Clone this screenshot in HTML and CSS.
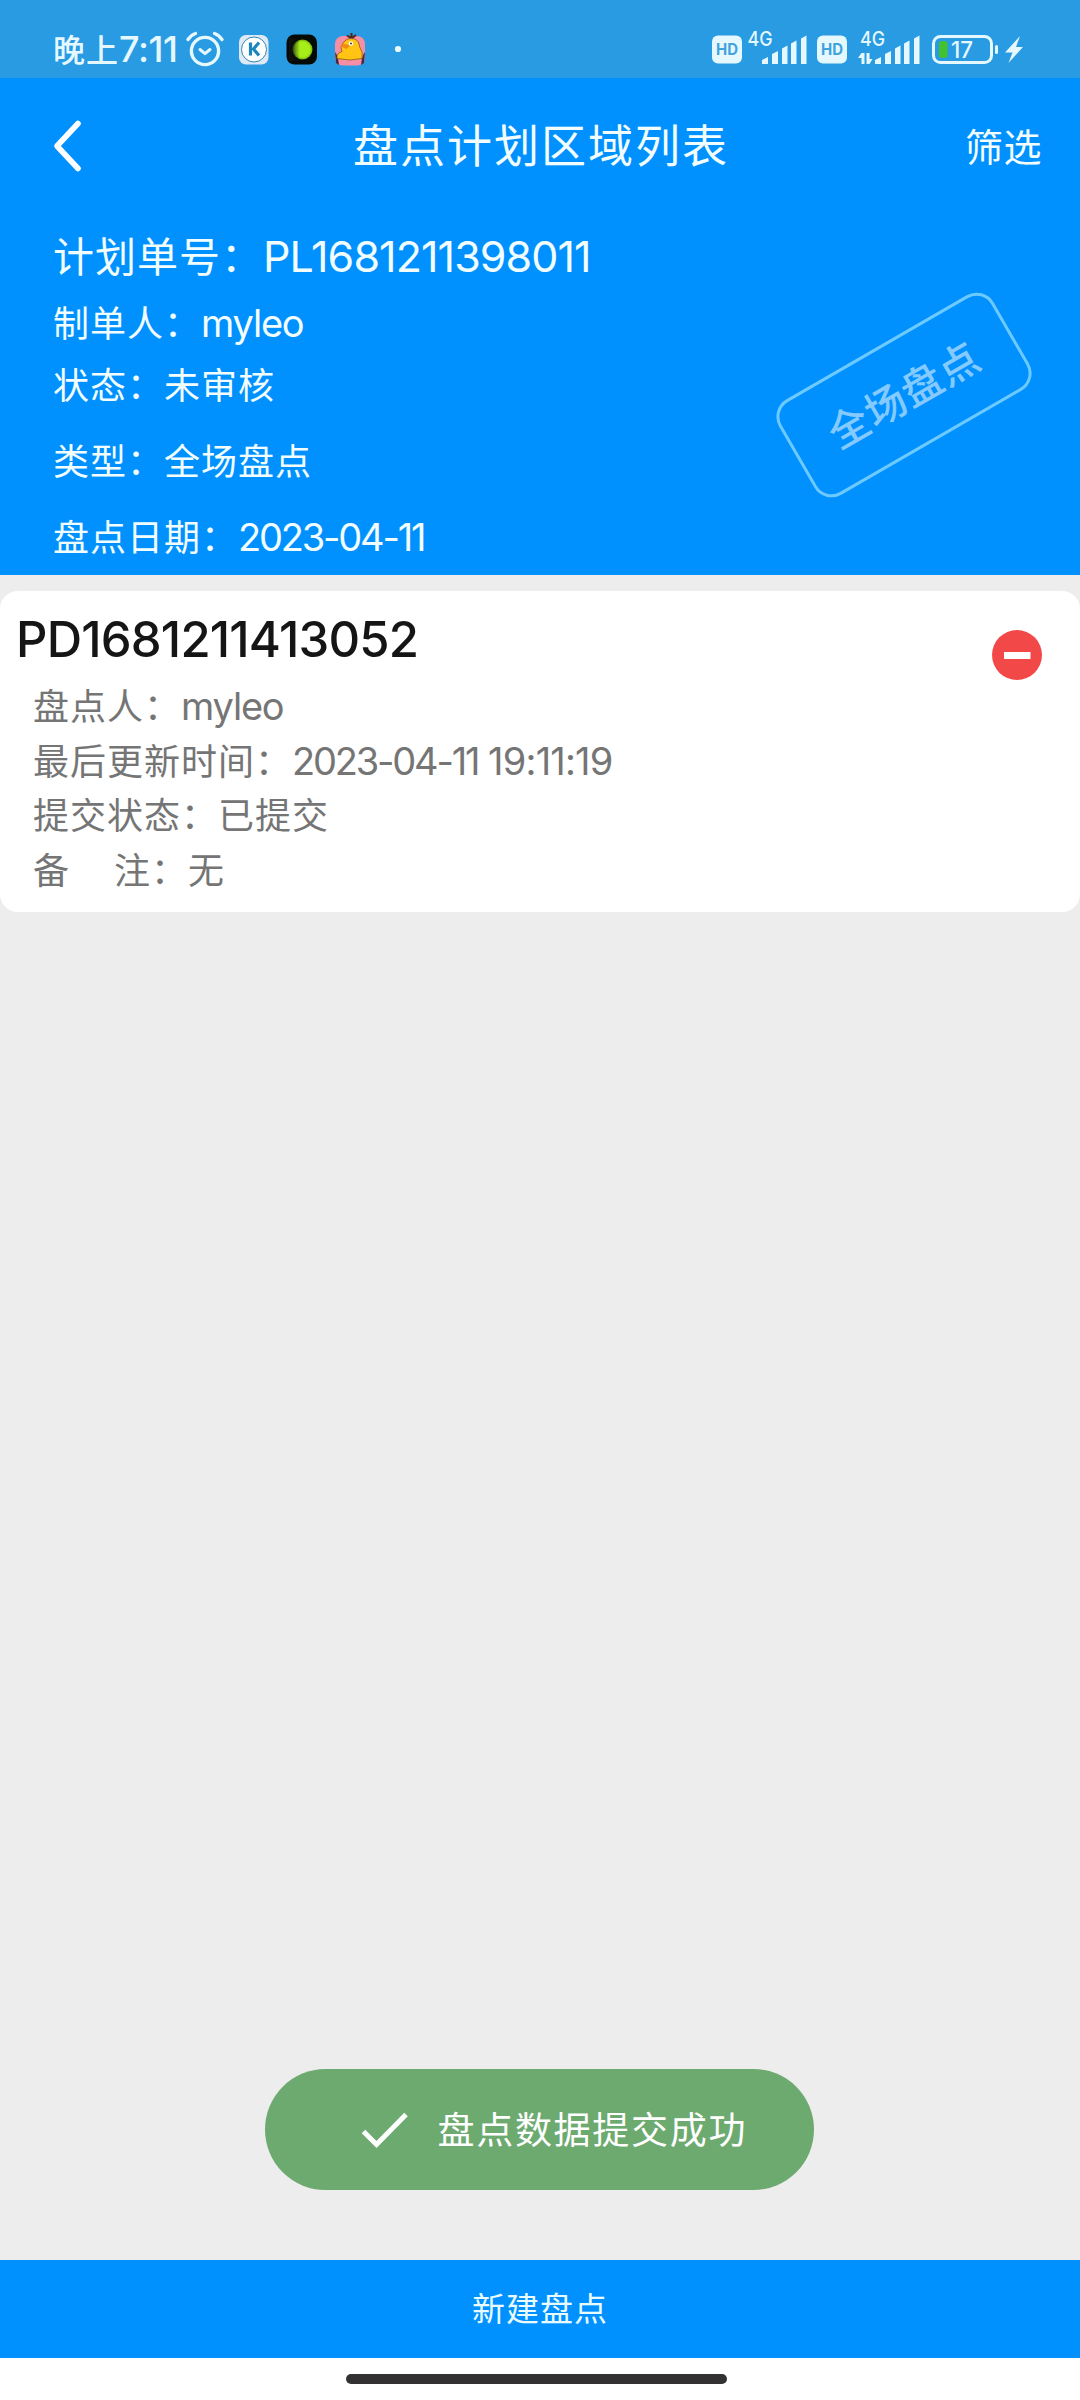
FILE: index.html
```html
<!DOCTYPE html>
<html lang="zh-CN">
<head>
<meta charset="utf-8">
<title>盘点计划区域列表</title>
<link rel="stylesheet" href="styles.css">
</head>
<body>
<div class="app">
  <div class="status">
    <span class="clock">晚上<span class="clock-num">7:11</span></span>
    <svg class="status-icons" width="230" height="50" viewBox="180 20 230 50">
      <defs>
        <radialGradient id="lime" cx="0.5" cy="0.5" r="0.5"><stop offset="0.75" stop-color="#a6ee18"/><stop offset="1" stop-color="#6fae0c"/></radialGradient>
        <linearGradient id="fade" x1="0" x2="1"><stop offset="0" stop-color="#111"/><stop offset="0.45" stop-color="#111" stop-opacity="0"/></linearGradient>
      </defs>
      <g fill="none" stroke="#e6f8ff" stroke-linecap="round" stroke-linejoin="round">
        <circle cx="205" cy="51" r="13.6" stroke-width="3.4"/>
        <path d="M200 49.500l5 4.200 5-4.200" stroke-width="3"/>
        <path d="M188 39.500q3-4.500 7.500-6M222 39.500q-3-4.500-7.500-6" stroke-width="3.400"/>
      </g>
      <rect x="239" y="35" width="29.500" height="29.500" rx="7" fill="#dfe9f5"/>
      <circle cx="254" cy="49.500" r="12.500" fill="#fff" stroke="#2e86b4" stroke-width="1"/>
      <path d="M250.500 42.500v13M259 42.500l-5.500 6.500 5.500 6.500" fill="none" stroke="#1d86bd" stroke-width="3.200"/>
      <rect x="286.500" y="34.500" width="30.500" height="30" rx="8" fill="#050a04"/>
      <circle cx="302.500" cy="49.500" r="10" fill="url(#lime)"/>
      <rect x="289" y="38" width="24" height="23" fill="url(#fade)"/>
      <rect x="335" y="36" width="30" height="29.500" rx="8" fill="#f68fa6"/>
      <path d="M335 52q3 3 4 13l-3-2zM365 52q-3 3-4 13l3-2z" fill="#4a2840"/>
      <path d="M337 57q0-4 5-5.500l-1-4q3-9 10-9 8 0 8.500 8 4 6 2.500 12-12 3-25 0z" fill="#ffc414" stroke="#7b4a10" stroke-width="0.700"/>
      <path d="M340 46q5-4 10 0l-4 3z" fill="#f28a13"/>
      <circle cx="351" cy="43.500" r="2.200" fill="#fff"/><circle cx="351" cy="43.500" r="0.900" fill="#222"/>
      <path d="M351 38l-4-2.500M351.500 38l0-5M352 38l4-3" stroke="#54231a" stroke-width="2" fill="none"/>
      <circle cx="398" cy="49" r="3.100" fill="#eafaff"/>
    </svg>
    <svg class="status-right" width="320" height="50" viewBox="708 20 320 50">
      <g fill="#e6f8ff">
        <rect x="712" y="35.500" width="30" height="28" rx="6"/>
        <rect x="817" y="35.500" width="30" height="28" rx="6"/>
        <text x="747.500" y="46" class="net" textLength="25" lengthAdjust="spacingAndGlyphs">4G</text>
        <text x="860" y="46" class="net" textLength="25" lengthAdjust="spacingAndGlyphs">4G</text>
        <path id="bars" d="M762 60l6-3v7h-6zM772 54l6-3v13h-6zM782 48.500l5.500-3v18.500h-5.500zM791 43.500l5.500-3v23.500h-5.500zM801 38.500l5.500-3v28.500h-5.500z"/>
        <use href="#bars" x="113"/>
        <path d="M861.500 64v-11h3v11zM858 58l3.500-5v5zM866.500 64v-11h3v11zM869.500 59h3l-3 5z"/>
        <rect x="995" y="45" width="3" height="9" rx="1.500"/>
        <path d="M1020 36l-15 16.500h7.500l-4 10.500 14.500-16h-7z"/>
        <text x="951" y="57.500" class="pct" textLength="22" lengthAdjust="spacingAndGlyphs">17</text>
      </g>
      <rect x="933.500" y="36.500" width="58" height="26" rx="7" fill="none" stroke="#e6f8ff" stroke-width="3"/>
      <rect x="939" y="41" width="8.500" height="17" rx="3" fill="#43c22f"/>
      <text x="716" y="55" class="hd" textLength="22" lengthAdjust="spacingAndGlyphs">HD</text>
      <text x="821" y="55" class="hd" textLength="22" lengthAdjust="spacingAndGlyphs">HD</text>
    </svg>
  </div>

  <header class="head">
    <nav class="nav">
      <svg class="back" width="34" height="54" viewBox="0 0 34 54"><path d="M28 4.500L7 27l21 22.500" fill="none" stroke="#fff" stroke-width="5.600" stroke-linecap="round" stroke-linejoin="round"/></svg>
      <h1 class="title">盘点计划区域列表</h1>
      <span class="filter">筛选</span>
    </nav>
    <div class="info">
      <p class="row plan">计划单号：<span class="num plan-no">PL1681211398011</span></p>
      <p class="row maker">制单人：<span class="num name">myleo</span></p>
      <p class="row state">状态：未审核</p>
      <p class="row type">类型：全场盘点</p>
      <p class="row date">盘点日期：<span class="num day">2023-04-11</span></p>
      <div class="stamp">全场盘点</div>
    </div>
  </header>

  <main class="list">
    <article class="card">
      <div class="card-text">
        <h2 class="card-no">PD1681211413052</h2>
        <p class="line">盘点人：<span class="num name">myleo</span></p>
        <p class="line">最后更新时间：<span class="num day">2023-04-11</span><span class="num time"> 19:11:19</span></p>
        <p class="line">提交状态：已提交</p>
        <p class="line"><span class="gap">备</span>注：无</p>
      </div>
      <svg class="remove" width="50" height="50" viewBox="0 0 50 50"><circle cx="25" cy="25" r="25" fill="#f24848"/><rect x="12" y="22" width="26.500" height="7" fill="#fff"/></svg>
    </article>
    <div class="toast">
      <svg width="48" height="38" viewBox="0 0 48 38"><path d="M2.500 20.500l13 13L45 3.500" fill="none" stroke="#fff" stroke-width="5"/></svg>
      <span class="toast-text">盘点数据提交成功</span>
    </div>
  </main>

  <div class="create">新建盘点</div>
  <div class="home"><i class="pill"></i></div>
</div>
</body>
</html>
```
FILE: styles.css
```css
* { box-sizing: border-box; margin: 0; padding: 0; }
body { font-family: Inter, "Noto Sans CJK SC", sans-serif; background: #ededed; }
.app { width: 1080px; height: 2400px; display: flex; flex-direction: column; overflow: hidden; }

.status { height: 78px; background: #289be2; display: flex; align-items: flex-start; padding: 20px 52px 0 53px; }
.clock { width: 127px; padding-top: 9px; line-height: 40px; font-size: 32px; font-weight: 500; color: #e6f8ff; white-space: nowrap; letter-spacing: 1px; }
.clock-num { font-size: 36px; letter-spacing: -0.400px; }
.status-right { margin-left: auto; }
.net { font-size: 20px; font-weight: 500; }
.pct { font-size: 23px; font-weight: 500; }
.hd { font-size: 16px; font-weight: 700; fill: #3fa3dc; }

.head { height: 497px; background: #0091ff; color: #f2fdff; }
.nav { height: 136px; display: grid; grid-template-columns: 190px 1fr 200px; align-items: center; padding: 0 38px 0 50px; }
.title { font-size: 45px; font-weight: 400; letter-spacing: 2px; text-align: center; white-space: nowrap; padding-bottom: 5px; }
.filter { font-size: 38px; letter-spacing: 0.5px; text-align: right; padding-bottom: 4px; }
.info { position: relative; padding: 1px 0 0 53px; }
.row { font-size: 36px; letter-spacing: 1px; white-space: nowrap; }
.plan { font-size: 41px; line-height: 83px; height: 83px; }
.maker { line-height: 50px; height: 48px; }
.state { line-height: 80px; height: 78px; }
.type { line-height: 76px; height: 74px; }
.date { line-height: 79px; height: 78px; }
.plan-no { font-size: 43px; letter-spacing: -0.900px; }
.name { font-size: 38px; letter-spacing: -1.200px; }
.day { font-size: 38px; letter-spacing: -2.200px; }
.time { font-size: 38px; letter-spacing: -0.800px; }
.stamp { position: absolute; left: 780px; top: 126px; width: 248px; height: 110px; border: 3px solid #6ccaff; border-radius: 20px; transform: rotate(-30deg); color: #84caff; font-size: 41px; font-weight: 500; letter-spacing: 1px; line-height: 104px; text-align: center; }

.list { flex: 1; display: flex; flex-direction: column; justify-content: space-between; align-items: center; padding: 16px 0 70px; background: #ededed; }
.card { width: 1080px; height: 321px; background: #fff; border-radius: 18px; display: flex; justify-content: space-between; padding: 14px 38px 0 16px; }
.card-no { font-size: 49px; font-weight: 500; line-height: 69px; margin-bottom: 5px; letter-spacing: -0.800px; color: #151515; }
.line { font-size: 36px; letter-spacing: 1px; line-height: 55px; height: 55px; padding-left: 17px; color: #757575; font-weight: 400; white-space: nowrap; }
.gap { display: inline-block; width: 81px; }
.remove { margin-top: 25px; }
.toast { width: 549px; height: 121px; margin-right: 2px; border-radius: 61px; background: #6daa70; color: #fff; display: flex; align-items: center; gap: 29px; padding-left: 96px; font-size: 37px; letter-spacing: 1.700px; white-space: nowrap; }
.toast-text { padding-bottom: 3px; }

.create { height: 98px; background: #0091ff; color: #e8fcff; font-size: 33px; letter-spacing: 1px; line-height: 98px; text-align: center; }
.home { height: 42px; background: #fff; display: flex; justify-content: center; padding: 16px 7px 0 0; }
.pill { width: 381px; height: 10px; border-radius: 5px; background: #333132; }
```
